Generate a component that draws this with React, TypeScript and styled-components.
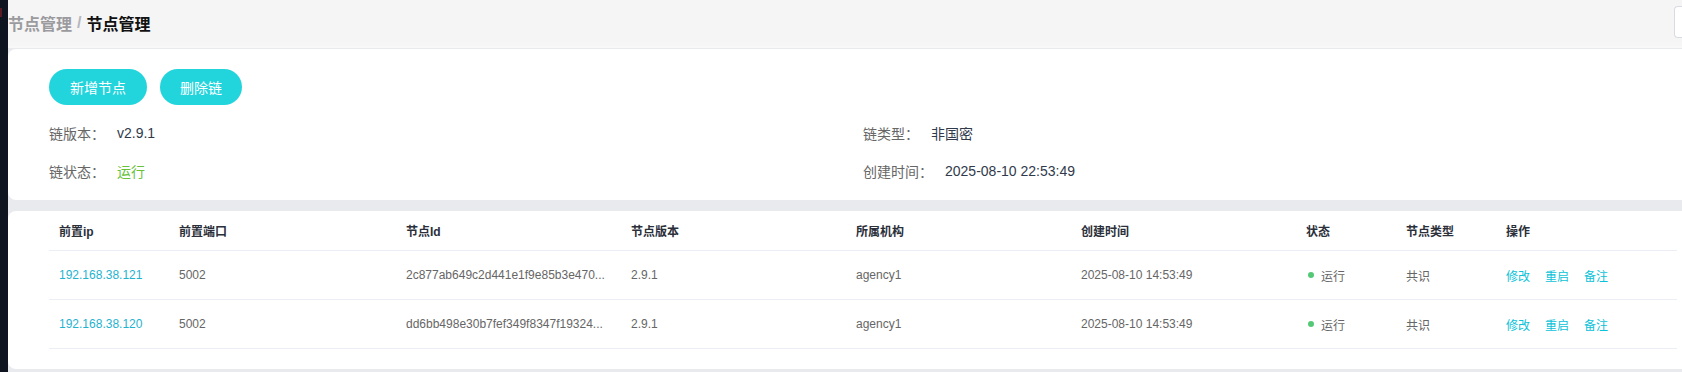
import React from 'react'
import styled, { createGlobalStyle } from 'styled-components'

const GlobalStyle = createGlobalStyle`
  html, body {
    margin: 0;
    padding: 0;
    overflow: hidden;
    background: #e9eaee;
    font-family: "Liberation Sans", "Noto Sans CJK SC", Arial, sans-serif;
  }
`

const nodes = [
  {
    ip: '192.168.38.121',
    port: '5002',
    id: '2c877ab649c2d441e1f9e85b3e470...',
    version: '2.9.1',
    agency: 'agency1',
    createTime: '2025-08-10 14:53:49',
    status: '运行',
    type: '共识',
  },
  {
    ip: '192.168.38.120',
    port: '5002',
    id: 'dd6bb498e30b7fef349f8347f19324...',
    version: '2.9.1',
    agency: 'agency1',
    createTime: '2025-08-10 14:53:49',
    status: '运行',
    type: '共识',
  },
]

const columns = ['前置ip', '前置端口', '节点Id', '节点版本', '所属机构', '创建时间', '状态', '节点类型', '操作']
const colWidths = '120px 227px 225px 225px 225px 225px 100px 100px 180px'

const App = () => {
  return (
    <Page>
      <GlobalStyle />
      <SideStrip>
        <RedMark />
      </SideStrip>
      <Main>
        <Header>
          <Breadcrumb>
            <CrumbParent>节点管理</CrumbParent>
            <CrumbSep>/</CrumbSep>
            <CrumbCurrent>节点管理</CrumbCurrent>
          </Breadcrumb>
          <HeaderBox />
        </Header>

        <Card>
          <Actions>
            <PrimaryButton>新增节点</PrimaryButton>
            <PrimaryButton>删除链</PrimaryButton>
          </Actions>
          <InfoGrid>
            <InfoItem>
              <InfoLabel>链版本：</InfoLabel>
              <InfoValue>v2.9.1</InfoValue>
            </InfoItem>
            <InfoItem>
              <InfoLabel>链类型：</InfoLabel>
              <InfoValue>非国密</InfoValue>
            </InfoItem>
            <InfoItem>
              <InfoLabel>链状态：</InfoLabel>
              <InfoValue $green>运行</InfoValue>
            </InfoItem>
            <InfoItem>
              <InfoLabel>创建时间：</InfoLabel>
              <InfoValue>2025-08-10 22:53:49</InfoValue>
            </InfoItem>
          </InfoGrid>
        </Card>

        <TableCard>
          <Table>
            <HeadRow>
              {columns.map(c => <HeadCell key={c}>{c}</HeadCell>)}
            </HeadRow>
            {nodes.map(n => (
              <Row key={n.ip}>
                <Cell $link>{n.ip}</Cell>
                <Cell>{n.port}</Cell>
                <Cell>{n.id}</Cell>
                <Cell>{n.version}</Cell>
                <Cell>{n.agency}</Cell>
                <Cell>{n.createTime}</Cell>
                <Cell>
                  <Dot />
                  {n.status}
                </Cell>
                <Cell>{n.type}</Cell>
                <Cell>
                  <ActionLink>修改</ActionLink>
                  <ActionLink>重启</ActionLink>
                  <ActionLink>备注</ActionLink>
                </Cell>
              </Row>
            ))}
          </Table>
        </TableCard>
      </Main>
    </Page>
  )
}

const Page = styled.div`
  display: flex;
  min-height: 372px;
`

const SideStrip = styled.div`
  flex: 0 0 8px;
  background: #0e1420;
  padding-top: 8px;
`

const RedMark = styled.div`
  width: 2px;
  height: 9px;
  background: #5a1a22;
`

const Main = styled.div`
  flex: 0 0 1753px;
  display: flex;
  flex-direction: column;
  background: #e9eaee;
`

const Header = styled.div`
  height: 48px;
  display: flex;
  align-items: center;
  justify-content: space-between;
  background: #f5f5f5;
  box-shadow: inset 0 -6px 6px -4px #f9f9f9;
`

const Breadcrumb = styled.div`
  display: flex;
  align-items: center;
  font-size: 16px;
  font-weight: 700;
  margin-top: -2px;
`

const CrumbParent = styled.span`
  color: #9b9b9f;
`

const CrumbSep = styled.span`
  color: #b4b7bd;
  margin: 0 5px;
`

const CrumbCurrent = styled.span`
  color: #111;
`

const HeaderBox = styled.div`
  width: 86px;
  height: 30px;
  margin-top: -4px;
  background: #fff;
  border: 1px solid #d8dbe2;
  border-right: none;
  border-radius: 4px 0 0 4px;
`

const Card = styled.div`
  margin-top: 1px;
  background: #fff;
  border-radius: 8px;
  padding: 20px 41px 10px;
`

const Actions = styled.div`
  display: flex;
  gap: 13px;
`

const PrimaryButton = styled.button`
  height: 36px;
  padding: 0 20px;
  border: none;
  border-radius: 18px;
  background: #22d4dc;
  color: #fff;
  font-family: inherit;
  font-size: 14px;
  cursor: pointer;

  &:first-child {
    padding: 0 21px;
  }
`

const InfoGrid = styled.div`
  margin-top: 9px;
  width: 1628px;
  display: grid;
  grid-template-columns: 814px 814px;
  grid-auto-rows: 38px;
`

const InfoItem = styled.div`
  display: flex;
  align-items: center;
  font-size: 14px;
`

const InfoLabel = styled.span`
  color: #666;
`

const InfoValue = styled.span<{ $green?: boolean }>`
  margin-left: 12px;
  color: ${p => (p.$green ? '#67c23a' : '#303a4b')};
`

const TableCard = styled.div`
  margin-top: 11px;
  background: #fff;
  border-radius: 8px;
  padding: 0 41px 20px;
`

const Table = styled.div`
  width: 1628px;
  font-size: 12px;
`

const HeadRow = styled.div`
  display: grid;
  grid-template-columns: ${colWidths};
  height: 39px;
  border-bottom: 1px solid #ebeef5;
`

const HeadCell = styled.div`
  display: flex;
  align-items: center;
  padding: 0 10px;
  color: #2b2f3a;
  font-weight: 700;
`

const Row = styled.div`
  display: grid;
  grid-template-columns: ${colWidths};
  height: 48px;
  border-bottom: 1px solid #ebeef5;
`

const Cell = styled.div<{ $link?: boolean }>`
  display: flex;
  align-items: center;
  padding: 0 10px;
  color: ${p => (p.$link ? '#1fb3cf' : '#666')};
  white-space: nowrap;
  overflow: hidden;
`

const Dot = styled.span`
  width: 6px;
  height: 6px;
  margin: 0 7px 0 2px;
  border-radius: 50%;
  background: #55c878;
`

const ActionLink = styled.span`
  color: #0cc2d9;
  margin-right: 15px;
  cursor: pointer;
`

export default App
